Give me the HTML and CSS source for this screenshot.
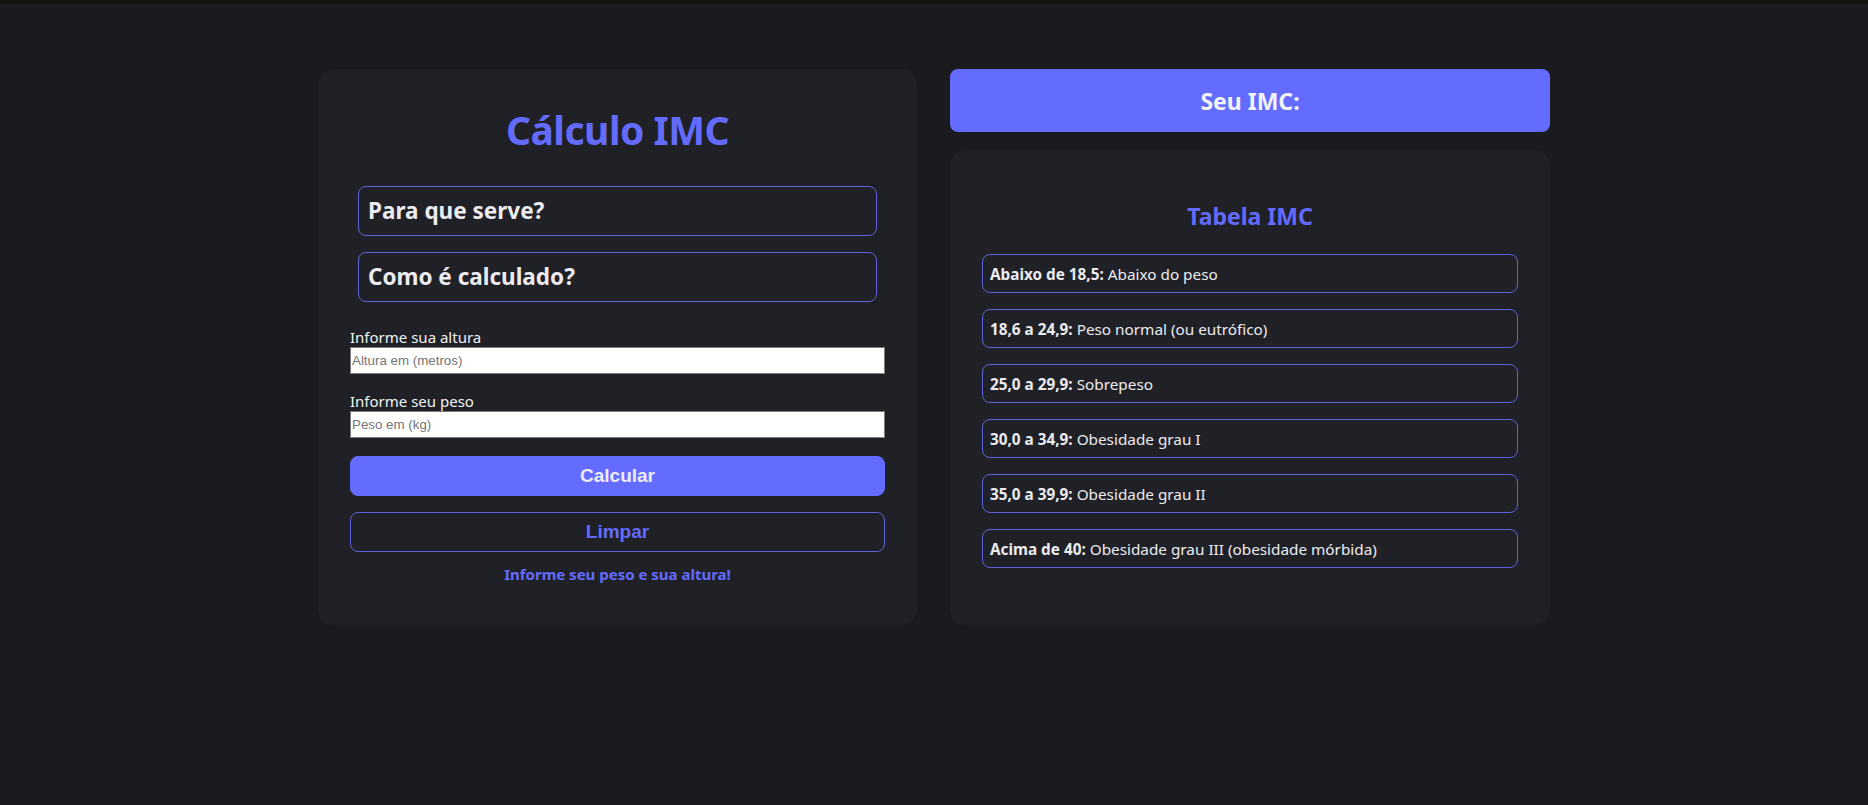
FILE: index.html
```html
<!DOCTYPE html>
<html lang="pt-BR">
<head>
<meta charset="utf-8">
<title>Cálculo IMC</title>
<link rel="stylesheet" href="styles.css">
</head>
<body>
<div class="topstrip"></div>
<main class="layout">
  <section class="card calc">
    <h1 class="title">Cálculo IMC</h1>
    <details class="info">
      <summary>Para que serve?</summary>
    </details>
    <details class="info">
      <summary>Como é calculado?</summary>
    </details>
    <label class="field-label" for="altura">Informe sua altura</label>
    <input class="field" id="altura" type="text" placeholder="Altura em (metros)">
    <label class="field-label second" for="peso">Informe seu peso</label>
    <input class="field" id="peso" type="text" placeholder="Peso em (kg)">
    <button class="btn btn-primary" type="button">Calcular</button>
    <button class="btn btn-outline" type="button">Limpar</button>
    <p class="message">Informe seu peso e sua altura!</p>
  </section>
  <section class="right">
    <div class="result">Seu IMC:</div>
    <div class="card table">
      <h2 class="table-title">Tabela IMC</h2>
      <ul class="rows">
        <li class="row"><strong>Abaixo de 18,5:</strong> Abaixo do peso</li>
        <li class="row"><strong>18,6 a 24,9:</strong> Peso normal (ou eutrófico)</li>
        <li class="row"><strong>25,0 a 29,9:</strong> Sobrepeso</li>
        <li class="row"><strong>30,0 a 34,9:</strong> Obesidade grau I</li>
        <li class="row"><strong>35,0 a 39,9:</strong> Obesidade grau II</li>
        <li class="row"><strong>Acima de 40:</strong> Obesidade grau III (obesidade mórbida)</li>
      </ul>
    </div>
  </section>
</main>
</body>
</html>
```

FILE: styles.css
```css
* { box-sizing: border-box; }

html, body {
  margin: 0;
  padding: 0;
  background: #1b1b1f;
  color: #e8e8ec;
  font-family: "Noto Sans", "Open Sans", sans-serif;
}

.topstrip {
  height: 4px;
  background: #131314;
}

.layout {
  display: flex;
  justify-content: center;
  align-items: stretch;
  gap: 33px;
  padding-top: 65px;
}

.card {
  background: #202127;
  border-radius: 16px;
}

.calc {
  width: 599px;
  padding: 32px 32px 41px;
  display: flex;
  flex-direction: column;
}

.title {
  margin: 5px 0 32px;
  text-align: center;
  font-size: 39px;
  line-height: 48px;
  font-weight: 700;
  color: #646cff;
  letter-spacing: -0.5px;
}

.info {
  margin: 0 8px 16px;
  border: 1px solid #5e62d6;
  border-radius: 8px;
  padding: 9px 9px;
}

.info summary {
  list-style: none;
  font-size: 22.5px;
  line-height: 30px;
  font-weight: 700;
  color: #ececf0;
}

.info summary::-webkit-details-marker { display: none; }

.field-label {
  display: block;
  margin-top: 10px;
  font-size: 15px;
  line-height: 19px;
  color: #f2f2f2;
}

.field-label.second { margin-top: 18px; }

.field {
  display: block;
  width: 100%;
  height: 27px;
  margin: 0;
  padding: 1px 1px;
  border: 1px solid #7a7a7a;
  background: #fff;
  font-family: "Liberation Sans", Arial, sans-serif;
  font-size: 13.33px;
  color: #222;
}

.field::placeholder { color: #757575; }

.btn {
  display: block;
  width: 100%;
  height: 40px;
  border-radius: 8px;
  font-family: "Liberation Sans", Arial, sans-serif;
  font-size: 19px;
  font-weight: 700;
  cursor: pointer;
}

.btn-primary {
  margin-top: 18px;
  background: #646cff;
  border: 1px solid #646cff;
  color: #ececf8;
}

.btn-outline {
  margin-top: 16px;
  background: transparent;
  border: 1px solid #5e62d6;
  color: #646cff;
}

.message {
  margin: 12px 0 0;
  text-align: center;
  font-size: 15px;
  line-height: 20px;
  font-weight: 700;
  color: #646cff;
}

.right {
  width: 600px;
  display: flex;
  flex-direction: column;
  gap: 18px;
}

.result {
  height: 63px;
  border-radius: 8px;
  background: #646cff;
  display: flex;
  align-items: center;
  justify-content: center;
  font-size: 23px;
  font-weight: 700;
  color: #f2f2fa;
}

.table {
  flex: 1;
  padding: 51px 32px 32px;
}

.table-title {
  margin: 0 0 23px;
  text-align: center;
  font-size: 23px;
  line-height: 30px;
  font-weight: 700;
  color: #646cff;
}

.rows {
  list-style: none;
  margin: 0;
  padding: 0;
  display: flex;
  flex-direction: column;
  gap: 16px;
}

.row {
  height: 39px;
  border: 1px solid #5e62d6;
  border-radius: 8px;
  padding: 0 7px;
  display: flex;
  align-items: center;
  gap: 4px;
  font-size: 15.3px;
  color: #ececf0;
}

.row strong { font-weight: 700; }
```
